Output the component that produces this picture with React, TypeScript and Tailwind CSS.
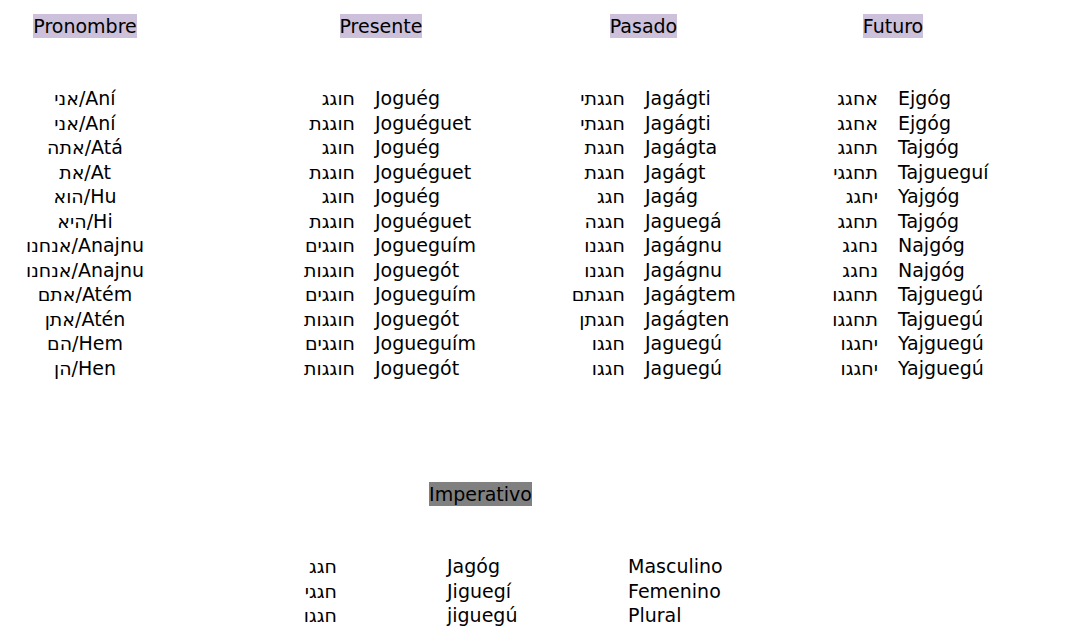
import React from 'react';

type Row = [string, string];

const pronombres = [
  'אני/Aní', 'אני/Aní', 'אתה/Atá', 'את/At', 'הוא/Hu', 'היא/Hi',
  'אנחנו/Anajnu', 'אנחנו/Anajnu', 'אתם/Atém', 'אתן/Atén', 'הם/Hem', 'הן/Hen',
];

const presente: Row[] = [
  ['חוגג', 'Joguég'], ['חוגגת', 'Joguéguet'], ['חוגג', 'Joguég'], ['חוגגת', 'Joguéguet'],
  ['חוגג', 'Joguég'], ['חוגגת', 'Joguéguet'], ['חוגגים', 'Jogueguím'], ['חוגגות', 'Joguegót'],
  ['חוגגים', 'Jogueguím'], ['חוגגות', 'Joguegót'], ['חוגגים', 'Jogueguím'], ['חוגגות', 'Joguegót'],
];

const pasado: Row[] = [
  ['חגגתי', 'Jagágti'], ['חגגתי', 'Jagágti'], ['חגגת', 'Jagágta'], ['חגגת', 'Jagágt'],
  ['חגג', 'Jagág'], ['חגגה', 'Jaguegá'], ['חגגנו', 'Jagágnu'], ['חגגנו', 'Jagágnu'],
  ['חגגתם', 'Jagágtem'], ['חגגתן', 'Jagágten'], ['חגגו', 'Jaguegú'], ['חגגו', 'Jaguegú'],
];

const futuro: Row[] = [
  ['אחגג', 'Ejgóg'], ['אחגג', 'Ejgóg'], ['תחגג', 'Tajgóg'], ['תחגגי', 'Tajgueguí'],
  ['יחגג', 'Yajgóg'], ['תחגג', 'Tajgóg'], ['נחגג', 'Najgóg'], ['נחגג', 'Najgóg'],
  ['תחגגו', 'Tajguegú'], ['תחגגו', 'Tajguegú'], ['יחגגו', 'Yajguegú'], ['יחגגו', 'Yajguegú'],
];

const imperativo = [
  ['חגג', 'Jagóg', 'Masculino'],
  ['חגגי', 'Jiguegí', 'Femenino'],
  ['חגגו', 'jiguegú', 'Plural'],
];

const Header = ({ label, dark }: { label: string; dark?: boolean }) => (
  <div className="flex justify-center mb-12">
    <span className={`inline-block leading-[24px] ${dark ? 'bg-[#808080]' : 'bg-[#ccc0da]'}`}>{label}</span>
  </div>
);

const Tense = ({ label, rows, heb, esp }: { label: string; rows: Row[]; heb: string; esp: string }) => (
  <div className="flex flex-col">
    <Header label={label} />
    <div className="grid gap-x-5" style={{ gridTemplateColumns: `${heb} ${esp}` }}>
      {rows.map(([h, e], i) => (
        <React.Fragment key={i}>
          <div className="text-right">{h}</div>
          <div>{e}</div>
        </React.Fragment>
      ))}
    </div>
  </div>
);

export default function App() {
  return (
    <div className="w-[1068px] h-[640px] overflow-hidden bg-white text-black text-[19px] leading-[24.5px] whitespace-nowrap pt-[14px] font-['DejaVu_Sans',sans-serif]">
      <div className="flex">
        <div className="w-[170px] flex flex-col">
          <Header label="Pronombre" />
          {pronombres.map((p, i) => (
            <div key={i} className="text-center">{p}</div>
          ))}
        </div>
        <div className="ml-[100px]">
          <Tense label="Presente" rows={presente} heb="85px" esp="117px" />
        </div>
        <div className="ml-[61px]">
          <Tense label="Pasado" rows={pasado} heb="72px" esp="89px" />
        </div>
        <div className="ml-[61px]">
          <Tense label="Futuro" rows={futuro} heb="83px" esp="93px" />
        </div>
      </div>

      <div className="mt-[102px] pl-[241px] w-[720px]">
        <Header label="Imperativo" dark />
        <div className="grid grid-cols-[96px_71px_92px] gap-x-[110px]">
          {imperativo.map(([h, e, g], i) => (
            <React.Fragment key={i}>
              <div className="text-right">{h}</div>
              <div>{e}</div>
              <div>{g}</div>
            </React.Fragment>
          ))}
        </div>
      </div>
    </div>
  );
}
